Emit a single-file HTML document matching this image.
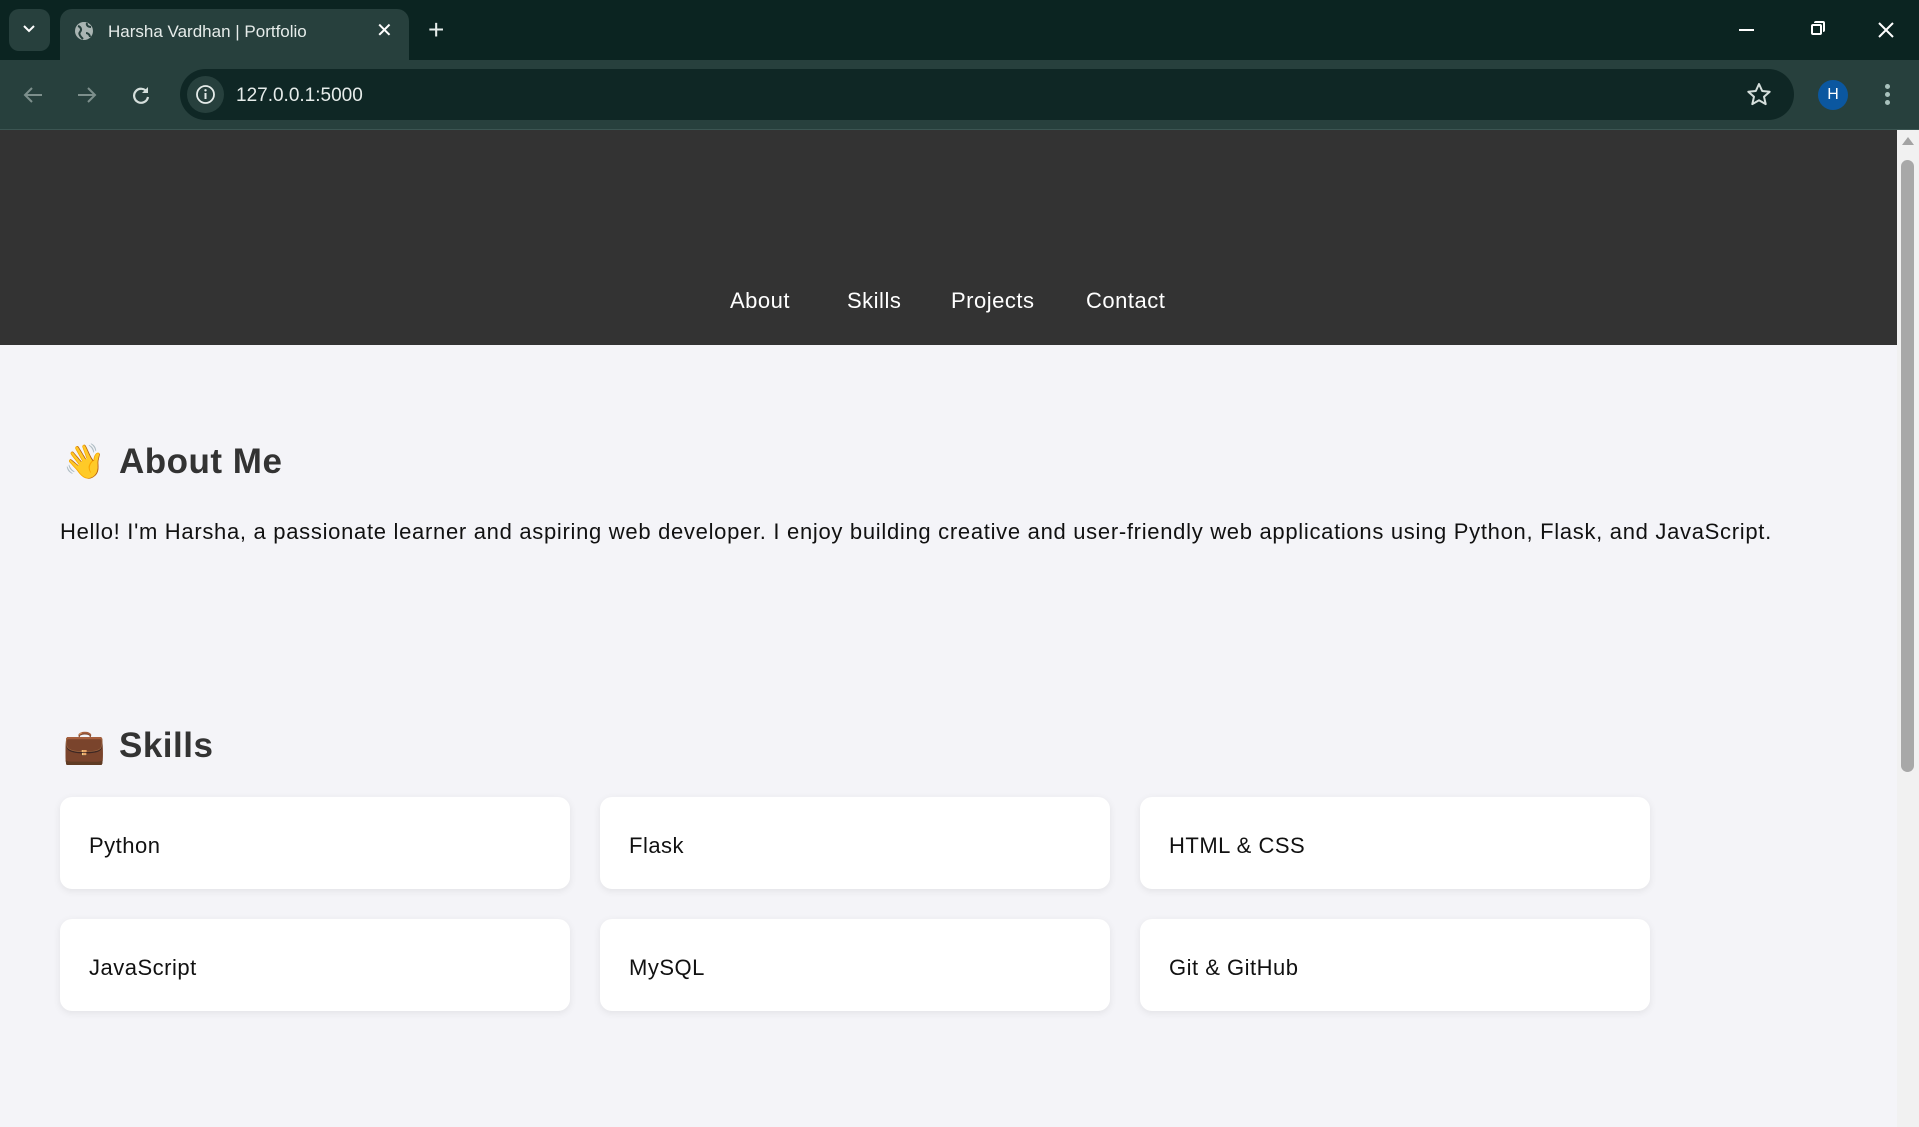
<!DOCTYPE html>
<html><head><meta charset="utf-8"><style>
*{margin:0;padding:0;box-sizing:border-box}
body{width:1919px;height:1127px;overflow:hidden;background:#f4f4f8;font-family:"Liberation Sans",sans-serif;position:relative}
.a{position:absolute}
.tabbar{left:0;top:0;width:1919px;height:60px;background:#0b2421}
.toolbar{left:0;top:60px;width:1919px;height:70px;background:#27403d;border-bottom:1px solid #3b5552}
.tab{left:60px;top:9px;width:349px;height:52px;background:#27403d;border-radius:12px 12px 0 0}
.omni{left:180px;top:69px;width:1614px;height:51px;background:#0f2725;border-radius:26px}
.header{left:0;top:130px;width:1897px;height:215px;background:#333}
.nav{color:#fff;font-size:22px;top:288px;letter-spacing:0.5px}
h2{position:absolute;font-size:35px;color:#333;font-weight:bold;letter-spacing:0.5px}
.card{position:absolute;width:510px;height:92px;background:#fff;border-radius:12px;box-shadow:0 2px 8px rgba(0,0,0,0.08);font-size:22px;color:#111;padding:36px 0 0 29px;letter-spacing:0.5px}
.sb{left:1897px;top:130px;width:22px;height:997px;background:#f1f1f1}
</style></head><body>
<div class="a tabbar"></div>
<div class="a" style="left:9px;top:9px;width:41px;height:42px;background:#27403d;border-radius:10px"></div>
<svg class="a" style="left:22px;top:24px" width="14" height="10"><path d="M2 2l5 5 5-5" stroke="#fff" stroke-width="2" fill="none"/></svg>
<div class="a tab"></div>
<svg class="a" style="left:73px;top:20px" width="22" height="22"><circle cx="11" cy="11" r="9" fill="#aab5b3"/><path d="M5 6c3 1 4 4 2 6s1 5 3 7M14 3c-1 3 2 4 4 4M13 13c2 0 4 2 4 4" stroke="#27403d" stroke-width="2" fill="none"/></svg>
<div class="a" style="left:108px;top:22px;color:#e6ecea;font-size:17px">Harsha Vardhan | Portfolio</div>
<div class="a" style="left:376px;top:18px;color:#fff;font-size:20px">✕</div>
<div class="a" style="left:428px;top:14px;color:#e6ecea;font-size:28px;font-weight:300">+</div>
<div class="a" style="left:1739px;top:29px;width:15px;height:2px;background:#fff"></div>
<div class="a" style="left:1811px;top:24px;width:11px;height:11px;border:2px solid #fff;border-radius:2px"></div>
<div class="a" style="left:1814px;top:21px;width:11px;height:11px;border-top:2px solid #fff;border-right:2px solid #fff;border-radius:2px"></div>
<svg class="a" style="left:1878px;top:22px" width="16" height="16"><path d="M1 1l14 14M15 1L1 15" stroke="#fff" stroke-width="2"/></svg>
<div class="a toolbar"></div>
<div class="a omni"></div>
<svg class="a" style="left:22px;top:85px" width="22" height="20"><path d="M20 10H3M10 3l-7 7 7 7" stroke="#7d8f8c" stroke-width="2" fill="none"/></svg>
<svg class="a" style="left:76px;top:85px" width="22" height="20"><path d="M2 10h17M12 3l7 7-7 7" stroke="#7d8f8c" stroke-width="2" fill="none"/></svg>
<svg class="a" style="left:130px;top:84px" width="22" height="22"><path d="M17 8A7 7 0 1 0 18 13" stroke="#d5dfdc" stroke-width="2.2" fill="none"/><path d="M18 3v6h-6z" fill="#d5dfdc"/></svg>
<div class="a" style="left:187px;top:76px;width:37px;height:37px;border-radius:50%;background:#27403d"></div>
<svg class="a" style="left:195px;top:84px" width="21" height="21"><circle cx="10.5" cy="10.5" r="8.5" stroke="#e6ecea" stroke-width="1.8" fill="none"/><path d="M10.5 9v6" stroke="#e6ecea" stroke-width="2"/><circle cx="10.5" cy="6.3" r="1.2" fill="#e6ecea"/></svg>
<div class="a" style="left:236px;top:85px;color:#e6ecea;font-size:19px">127.0.0.1:5000</div>
<svg class="a" style="left:1746px;top:82px" width="26" height="26"><path d="M13 2l3.2 7 7.5.7-5.7 5 1.7 7.4L13 18.3 6.3 22.1 8 14.7 2.3 9.7 9.8 9z" stroke="#d5dfdc" stroke-width="2" fill="none" stroke-linejoin="round"/></svg>
<div class="a" style="left:1818px;top:80px;width:30px;height:30px;border-radius:50%;background:#0b57a0;color:#fff;font-size:16px;text-align:center;line-height:30px">H</div>
<div class="a" style="left:1885px;top:84px;width:5px;height:5px;border-radius:50%;background:#a9c2bd;box-shadow:0 8px 0 #a9c2bd,0 16px 0 #a9c2bd"></div>
<div class="a header"></div>
<div class="a nav" style="left:730px">About</div>
<div class="a nav" style="left:847px">Skills</div>
<div class="a nav" style="left:951px">Projects</div>
<div class="a nav" style="left:1086px">Contact</div>
<div class="a" style="left:63px;top:442px;font-size:34px;font-family:'Noto Color Emoji',sans-serif">👋</div>
<h2 style="left:119px;top:442px">About Me</h2>
<div class="a" style="left:60px;top:519px;font-size:22px;color:#111;letter-spacing:0.7px;white-space:nowrap">Hello! I'm Harsha, a passionate learner and aspiring web developer. I enjoy building creative and user-friendly web applications using Python, Flask, and JavaScript.</div>
<div class="a" style="left:63px;top:727px;font-size:34px;font-family:'Noto Color Emoji',sans-serif">💼</div>
<h2 style="left:119px;top:726px">Skills</h2>
<div class="card" style="left:60px;top:797px">Python</div>
<div class="card" style="left:600px;top:797px">Flask</div>
<div class="card" style="left:1140px;top:797px">HTML &amp; CSS</div>
<div class="card" style="left:60px;top:919px">JavaScript</div>
<div class="card" style="left:600px;top:919px">MySQL</div>
<div class="card" style="left:1140px;top:919px">Git &amp; GitHub</div>
<div class="a sb"></div>
<div class="a" style="left:1902px;top:137px;width:0;height:0;border-left:6px solid transparent;border-right:6px solid transparent;border-bottom:8px solid #a3a3a3"></div>
<div class="a" style="left:1901px;top:160px;width:13px;height:612px;border-radius:7px;background:#a8a8a8"></div>
</body></html>
